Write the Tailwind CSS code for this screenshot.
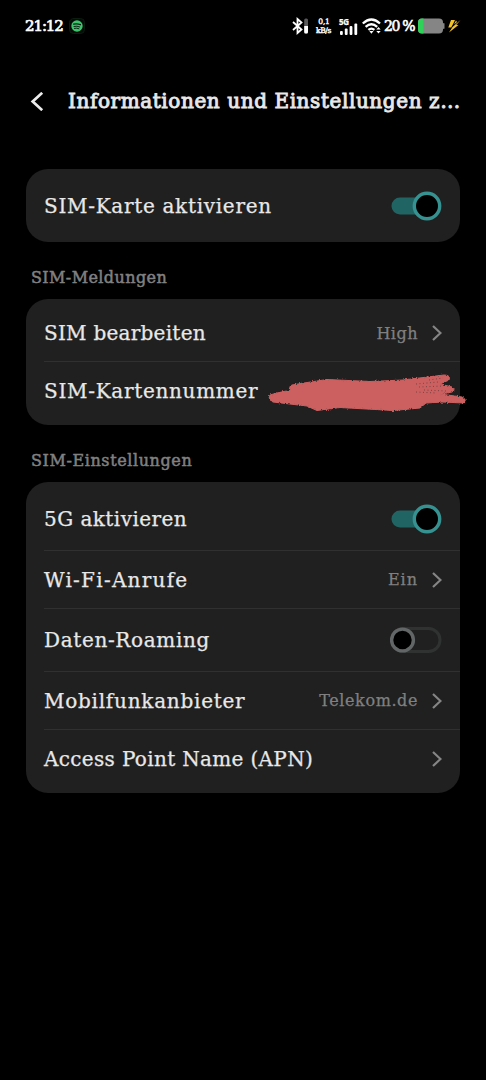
<!DOCTYPE html>
<html lang="de">
<head>
  <meta charset="UTF-8">
  <meta name="viewport" content="width=device-width, initial-scale=1.0">
  <script src="https://cdn.jsdelivr.net/npm/@tailwindcss/browser@4"></script>
  <title>SIM-Einstellungen</title>
</head>
<body class="relative min-h-screen overflow-hidden bg-black font-['DejaVu_Serif',serif] text-[20px] leading-none text-[#e8e8e8] [-webkit-text-stroke:0.25px]">
  <!-- status bar -->
  <header class="flex h-[52px] items-center pl-[25px] pr-[25px] text-white">
    <span class="w-[38px] whitespace-nowrap text-[15px] tracking-[-1.1px] [-webkit-text-stroke:0.7px]">21:12</span>
    <svg class="ml-[6px] size-[16px] shrink-0" viewBox="0 0 16 16" fill="none" stroke-linecap="round">
      <rect x=".5" y=".5" width="15" height="15" rx="4" fill="#050c07" stroke="#0c1c10"/>
      <circle cx="8" cy="8" r="5.7" fill="#3cc56c"/>
      <path d="M4.6 6.2q3.6-1 6.8.5" stroke="#0b2413" stroke-width="1.3"/>
      <path d="M5 8.4q3-.8 5.7.5M5.4 10.300q2.500-.6 4.500.4" stroke="#0b2413"/>
    </svg>
    <svg class="ml-auto h-[18px] w-[17px] shrink-0" viewBox="0 0 17 18" fill="none">
      <path d="M1 5l8.500 7.500L5.500 16V2l4 3.500L1 13" stroke="#fff" stroke-width="1.800"/>
      <rect x="12.200" y="1.500" width="3.800" height="15" rx="1.500" fill="#5a5a5a"/>
      <path d="M12.200 9h3.800v6a1.500 1.500 0 0 1-1.500 1.500h-.8a1.500 1.500 0 0 1-1.500-1.500z" fill="#fff"/>
    </svg>
    <div class="ml-[6px] w-[18px] shrink-0 text-center text-[7.5px] leading-[9px] tracking-[-0.2px] [-webkit-text-stroke:0.4px]">
      <p class="whitespace-nowrap">0,1</p>
      <p class="-ml-px whitespace-nowrap tracking-[-0.4px]">kB/s</p>
    </div>
    <div class="ml-[6px] w-[19px] shrink-0">
      <p class="font-['Noto_Sans',sans-serif] text-[8px] font-bold leading-[7px] tracking-[-0.3px]">5G</p>
      <svg class="-mt-[3px] h-[13px] w-[19px]" viewBox="0 0 19 13" fill="#fff">
        <rect x="1" y="9" width="2.800" height="4" rx="1"/>
        <rect x="5.800" y="6.500" width="2.800" height="6.500" rx="1"/>
        <rect x="10.600" y="4" width="2.800" height="9" rx="1"/>
        <rect x="15.400" y="1.500" width="2.800" height="11.500" rx="1"/>
      </svg>
    </div>
    <svg class="ml-[4px] h-[18px] w-[20px] shrink-0" viewBox="0 0 20 18" fill="none" stroke="#fff" stroke-width="2.300">
      <path d="M.8 6.500q8.600-8 17.200 0M3.600 9.900q5.800-5.200 11.600 0M6.400 12.900q3-2.500 6 0"/>
      <path d="M7.300 14h4.200l-2.100 2.700z" fill="#fff" stroke="none"/>
      <path d="M14.300 12.600l2.200-2.500 2.200 2.500zM14.300 14l2.200 2.500 2.200-2.500z" fill="#fff" stroke="none"/>
    </svg>
    <span class="ml-[2px] w-[30px] shrink-0 whitespace-nowrap text-[14px] tracking-[-1.3px] [-webkit-text-stroke:0.6px]">20 %</span>
    <svg class="ml-[4px] h-[16px] w-[27px] shrink-0" viewBox="0 0 27 16">
      <rect y=".5" width="25" height="15" rx="4" fill="#858585"/>
      <path d="M4 .5h1.500v15H4a4 4 0 0 1-4-4v-7a4 4 0 0 1 4-4z" fill="#2fd158"/>
      <rect x="25" y="5" width="1.500" height="6" rx=".7" fill="#858585"/>
    </svg>
    <svg class="ml-[3px] h-[14px] w-[13px] shrink-0" viewBox="0 0 13 14" fill="#f5c327">
      <path d="M3 1h4L4.800 5.500 3.200 8.500H.3zM12.500 1L8.300 6H10.500L1 13.500 4.500 8z"/>
      <path d="M8 1.500L6 5.500l3-2.500z"/>
    </svg>
  </header>

  <!-- title -->
  <div class="flex h-[98px] items-center pl-[29px]">
    <svg class="size-[19px] shrink-0" viewBox="0 0 18 18" fill="none" stroke="#ececec" stroke-width="2.600">
      <path d="M12.500 .8L3.500 9l9 8.200"/>
    </svg>
    <h1 class="ml-[20px] whitespace-nowrap text-[20px] tracking-[0.58px] [-webkit-text-stroke:0.9px]">Informationen und Einstellungen z…</h1>
  </div>

  <main class="px-[26px] pt-[19px]">
    <section class="rounded-[22px] bg-[#202020] py-[5px] pl-[18px]">
      <div class="flex h-[63px] items-center justify-between pr-[18px]">
        <span class="whitespace-nowrap tracking-[0.7px]">SIM-Karte aktivieren</span>
        <svg class="h-[30px] w-[52px]" viewBox="0 0 52 30">
          <rect x="1.500" y="6.500" width="45" height="17" rx="8.500" fill="#216464"/>
          <circle cx="37" cy="15" r="12.700" fill="#000" stroke="#369191" stroke-width="3.400"/>
        </svg>
      </div>
    </section>

    <h2 class="flex h-[57px] items-center pl-[5px] pt-[14px] text-[16px] text-[#808080] [-webkit-text-stroke:0.5px]"><span class="whitespace-nowrap tracking-[0.4px]">SIM-Meldungen</span></h2>

    <section class="relative rounded-[22px] bg-[#202020] py-[5px] pl-[18px]">
      <div class="flex h-[58px] items-center border-b border-[#303030] pr-[18px]">
        <span class="whitespace-nowrap tracking-[0.25px]">SIM bearbeiten</span>
        <span class="ml-auto whitespace-nowrap pt-[2px] text-[16px] tracking-[0.5px] text-[#808080]">High</span>
        <svg class="ml-[14px] h-[16px] w-[10px]" viewBox="0 0 10 16" fill="none" stroke="#858585" stroke-width="2.200"><path d="M1 1l7.500 7L1 15"/></svg>
      </div>
      <div class="flex h-[58px] items-center pr-[18px]">
        <span class="whitespace-nowrap tracking-[0.7px]">SIM-Kartennummer</span>
      </div>
      <!-- crayon strokes over the card number -->
      <svg class="absolute left-[240px] top-[71px] h-[46px] w-[204px]" viewBox="0 0 204 46">
        <filter id="rough" x="-5%" y="-10%" width="110%" height="120%">
          <feTurbulence type="fractalNoise" baseFrequency="0.6" numOctaves="2" seed="4" result="n"/>
          <feDisplacementMap in="SourceGraphic" in2="n" scale="3" xChannelSelector="R" yChannelSelector="G"/>
        </filter>
        <g filter="url(#rough)" fill="#cc6060" stroke="#cc6060" stroke-linejoin="round">
          <path d="M4 25L11 23L25 20Q22 17 26 15L38 13L61 9.500L104 11.500L137 10L178 5Q185 5 183 10L174 14L186 17Q190 20 186 22L174 24L196 27Q202 30 197 33L177 32L160 33L154 38L127 40.500L74 37.500L51 40.500L41 36L7 32Q1 29 4 25Z"/>
        </g>
        <path d="M150 14l22-2M153 17l24-1M158 20l22 1M150 22l20 1M163 10l14-2" fill="none" stroke="#202020" stroke-width=".8" stroke-dasharray="1 2.500" opacity=".6"/>
      </svg>
    </section>

    <h2 class="flex h-[57px] items-center pl-[5px] pt-[14px] text-[16px] text-[#808080] [-webkit-text-stroke:0.5px]"><span class="whitespace-nowrap tracking-[0.6px]">SIM-Einstellungen</span></h2>

    <section class="rounded-[22px] bg-[#202020] py-[5px] pl-[18px]">
      <div class="flex h-[64px] items-center justify-between border-b border-[#303030] pr-[18px]">
        <span class="whitespace-nowrap tracking-[0.45px]">5G aktivieren</span>
        <svg class="h-[30px] w-[52px]" viewBox="0 0 52 30">
          <rect x="1.500" y="6.500" width="45" height="17" rx="8.500" fill="#216464"/>
          <circle cx="37" cy="15" r="12.700" fill="#000" stroke="#369191" stroke-width="3.400"/>
        </svg>
      </div>
      <div class="flex h-[58px] items-center border-b border-[#303030] pr-[18px]">
        <span class="whitespace-nowrap tracking-[1.25px]">Wi-Fi-Anrufe</span>
        <span class="ml-auto whitespace-nowrap pt-px text-[16px] tracking-[1px] text-[#808080]">Ein</span>
        <svg class="ml-[14px] h-[16px] w-[10px]" viewBox="0 0 10 16" fill="none" stroke="#858585" stroke-width="2.200"><path d="M1 1l7.500 7L1 15"/></svg>
      </div>
      <div class="flex h-[63px] items-center justify-between border-b border-[#303030] pr-[18px]">
        <span class="whitespace-nowrap tracking-[0.65px]">Daten-Roaming</span>
        <svg class="h-[30px] w-[52px]" viewBox="0 0 52 30">
          <rect x="1.500" y="3.500" width="48.500" height="23" rx="11.500" fill="none" stroke="#303232" stroke-width="3"/>
          <circle cx="12.500" cy="15" r="10.900" fill="#000" stroke="#626666" stroke-width="3.400"/>
        </svg>
      </div>
      <div class="flex h-[58px] items-center border-b border-[#303030] pr-[18px]">
        <span class="whitespace-nowrap tracking-[0.75px]">Mobilfunkanbieter</span>
        <span class="ml-auto whitespace-nowrap pt-px text-[16px] tracking-[0.6px] text-[#808080]">Telekom.de</span>
        <svg class="ml-[14px] h-[16px] w-[10px]" viewBox="0 0 10 16" fill="none" stroke="#858585" stroke-width="2.200"><path d="M1 1l7.500 7L1 15"/></svg>
      </div>
      <div class="flex h-[58px] items-center pr-[18px]">
        <span class="whitespace-nowrap tracking-[0.33px]">Access Point Name (APN)</span>
        <svg class="ml-auto h-[16px] w-[10px]" viewBox="0 0 10 16" fill="none" stroke="#858585" stroke-width="2.200"><path d="M1 1l7.500 7L1 15"/></svg>
      </div>
    </section>
  </main>
</body>
</html>
